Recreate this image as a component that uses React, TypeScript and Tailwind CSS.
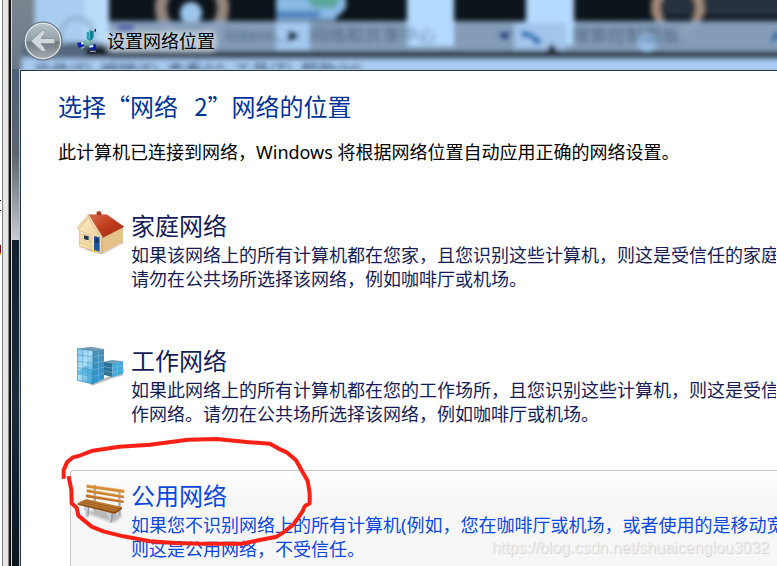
import { ReactNode } from "react";

function GlassBackdrop() {
  return (
    <svg
      className="absolute left-0 top-0"
      width="2000"
      height="72"
      viewBox="12 0 2000 72"
      aria-hidden="true"
    >
      <defs>
        <filter id="soft" x="-20%" y="-20%" width="140%" height="140%">
          <feGaussianBlur stdDeviation="2.8" />
        </filter>
        <linearGradient id="edge" x1="0" y1="0" x2="0" y2="1">
          <stop offset="0" stopColor="#7d858d" />
          <stop offset="0.6" stopColor="#6f7d8b" />
          <stop offset="1" stopColor="#5a6f85" />
        </linearGradient>
      </defs>
      <rect x="0" y="0" width="2012" height="72" fill="#0b131b" />
      <g filter="url(#soft)">
        <rect x="650" y="-10" width="1400" height="26" fill="#25313d" />
        <circle cx="192" cy="8" r="31" fill="none" stroke="#93857d" strokeWidth="12" />
        <circle cx="191" cy="13" r="11" fill="#9dc6ee" />
        <circle cx="678" cy="8" r="22" fill="none" stroke="#a38c7b" strokeWidth="8" />
        <rect x="100" y="21" width="1900" height="30" fill="#8ba5c1" opacity="0.94" />
        <rect x="-10" y="-10" width="46" height="100" fill="url(#edge)" />
        <rect x="35" y="-10" width="74" height="53" fill="#a9cdf0" />
        <rect x="85" y="-10" width="23" height="53" fill="#b9dcfb" />
        <circle cx="77" cy="34" r="16" fill="none" stroke="#8fb0cf" strokeWidth="4" />
        <rect x="22" y="44" width="88" height="13" fill="#53687f" />
        <rect x="86" y="47" width="22" height="9" fill="#10161e" />
        <rect x="106" y="51" width="1900" height="5" fill="#2d3a48" />
        <rect x="22" y="58" width="1990" height="20" fill="#a9cbf1" />
        <rect x="105" y="31" width="112" height="22" rx="8" fill="#e3edf5" opacity="0.4" />
        <path d="M276 -4h70v12l-12 12h-58z" fill="#8abae6" />
        <path d="M303 -6h40l-8 14h-22z" fill="#5da69c" />
        <path d="M276 11h44v7h-44z" fill="#4d80bf" />
        <rect x="276" y="21" width="34" height="29" fill="#a3c8ee" />
        <rect x="407" y="-10" width="47" height="56" fill="#b5daff" />
        <rect x="526" y="-10" width="48" height="55" fill="#b5daff" />
        <rect x="514" y="23" width="52" height="26" fill="#a2c5ea" />
        <circle cx="647" cy="42" r="10" fill="#9cc3ea" />
        <path d="M546 52l6-9 6 9z" fill="#111" />
      </g>
      <g
        filter="url(#soft)"
        fill="#2f455e"
        fontSize="18"
        fontFamily='"Noto Sans CJK SC", sans-serif'
      >
        <g opacity="0.6">
          <text x="225" y="42">Intern...</text>
          <text x="310" y="42">网络和共享中心</text>
          <text x="572" y="42">搜索控制面板</text>
        </g>
        <text x="34" y="78" xmlSpace="preserve">
          文件(F)  编辑(E)  查看(V)  工具(T)  帮助(H)
        </text>
        <path d="M118 25h16v5h-16z" fill="#4655a0" />
        <path d="M289 31l10 5-10 5z" fill="#15202e" />
        <path d="M498 33h13l-6 7z" fill="#1d3578" />
        <path d="M522 31l10 3 10 8-6 2-5-7-9-1z" fill="#205ca4" />
        <path d="M770 42l6-10 4 4z" fill="#22528e" />
      </g>
    </svg>
  );
}

function BackButton() {
  return (
    <button type="button" aria-label="返回" className="size-10 shrink-0">
      <svg viewBox="0 0 40 40" className="size-10">
        <defs>
          <linearGradient id="disc" x1="0" y1="0" x2="0" y2="1">
            <stop offset="0" stopColor="#b7c4cb" />
            <stop offset="0.48" stopColor="#92a0a8" />
            <stop offset="0.54" stopColor="#707b83" />
            <stop offset="1" stopColor="#a6adb1" />
          </linearGradient>
        </defs>
        <circle cx="20" cy="20" r="19" fill="#7c8c99" stroke="#64727e" />
        <circle cx="20" cy="20" r="17.6" fill="url(#disc)" stroke="#e0e6e9" strokeWidth="1.2" />
        <path
          d="M8 20L19 9.500Q22 8.500 22.500 11Q22.500 12 18 17.500H30.500Q32 17.500 32 20T30.500 22.500H18Q22.500 28 22.500 29.500Q22 31.500 19 30.500Z"
          fill="#d2d7d9"
          stroke="#8c979e"
          strokeWidth="1"
        />
      </svg>
    </button>
  );
}

function NetworkIcon() {
  return (
    <svg viewBox="0 0 60 69" className="h-[23px] w-5 shrink-0" aria-hidden="true">
      <path d="M30 34L12 46M34 34L48 46M15 45L44 50" stroke="#4fc06a" strokeWidth="3" />
      <path d="M27 12L38 4L50 7V24L41 36L28 28Z" fill="#188da6" />
      <path d="M27 12L38 4V30L28 28Z" fill="#70d5dc" />
      <path d="M33 9V31M44 7V32" stroke="#075f7c" strokeWidth="3" />
      <path d="M53 0h4v8h-4z" fill="#222" />
      <path d="M0 42L19 39L21 50L5 56Z" fill="#0c20b4" />
      <path d="M12 40L19 39L21 45L13 47Z" fill="#d7eaff" />
      <path d="M36 50L56 45L58 62L42 64Z" fill="#0c20b4" />
      <path d="M36 50L48 47L49 54L38 56Z" fill="#d7eaff" />
      <path d="M13 58l10-4M39 67h17" stroke="#b8c4cb" strokeWidth="3" />
    </svg>
  );
}

function HouseIcon() {
  return (
    <svg viewBox="0 0 144 144" className="size-12" aria-hidden="true">
      <defs>
        <linearGradient id="roof" x1="0" y1="0" x2="1" y2="1">
          <stop offset="0" stopColor="#d9694a" />
          <stop offset="0.5" stopColor="#bf3c1c" />
          <stop offset="1" stopColor="#9c2a12" />
        </linearGradient>
        <linearGradient id="wall" x1="0" y1="0" x2="1" y2="1">
          <stop offset="0" stopColor="#fdebc6" />
          <stop offset="1" stopColor="#ecc98e" />
        </linearGradient>
      </defs>
      <path d="M20 122L76 137L143 101L130 90Z" fill="#000" opacity="0.15" />
      <path d="M75 82L138 50V100L75 133Z" fill="#e6c48b" />
      <path d="M8 55L36 22L75 80V133L8 113Z" fill="url(#wall)" stroke="#b8925c" strokeWidth="1.500" />
      <path
        d="M9 66L75 86M9 77L75 97M9 88L75 109M9 100L75 121M75 93L138 63M75 103L138 73M75 113L138 83M75 123L138 93"
        stroke="#d3b07a"
        strokeWidth="1.200"
      />
      <path d="M59 10L67 8L73 11V27L59 24Z" fill="#8f3218" />
      <path d="M57 9L66 6L75 9L67 13Z" fill="#b94a28" />
      <path d="M35 17H90L141 53L77 86Z" fill="url(#roof)" stroke="#9a3018" />
      <path d="M0 56L35 16L78 86L71 86L35 25L5 60Z" fill="#f4dfb8" stroke="#a97b48" />
      <path d="M18 76L38 80V98L18 94Z" fill="#fff5dc" stroke="#a9824e" />
      <path d="M21 79L35 82V94L21 91Z" fill="#263644" />
      <path d="M47 77L71 83V130L47 125Z" fill="#f4e4c0" />
      <path d="M51 81L68 85V128L51 124Z" fill="#1f559b" />
      <path d="M55 87L64 89V103L55 101Z" fill="#18375f" />
      <path d="M46 122L60 126L56 131L44 127Z" fill="#e9c91f" />
    </svg>
  );
}

function OfficeIcon() {
  return (
    <svg viewBox="0 0 144 144" className="size-12" aria-hidden="true">
      <defs>
        <linearGradient id="front" x1="0" y1="0" x2="1" y2="1">
          <stop offset="0" stopColor="#7cc4ee" />
          <stop offset="0.45" stopColor="#b4e3f9" />
          <stop offset="1" stopColor="#2c9dd7" />
        </linearGradient>
        <linearGradient id="side" x1="0" y1="0" x2="0" y2="1">
          <stop offset="0" stopColor="#4a8db2" />
          <stop offset="1" stopColor="#2a96d2" />
        </linearGradient>
      </defs>
      <path d="M38 120L82 103L143 73L137 94L106 103L47 125Z" fill="#000" opacity="0.25" />
      <path d="M79 53L105 48L138 52L107 62Z" fill="#6d9fb8" />
      <path d="M79 53L106 59V99L79 92Z" fill="#2f7195" />
      <path d="M106 60L138 52V89L106 99Z" fill="#41a8d9" />
      <path d="M106 73L138 63M106 86L138 76M79 67L106 73M79 80L106 86M121 57V94" stroke="#8bc6e0" strokeWidth="1.500" />
      <path d="M1 14L42 8L81 15L48 22Z" fill="#729db4" />
      <path d="M1 14L48 20V120L1 109Z" fill="url(#front)" />
      <path d="M48 20L81 15V105L48 120Z" fill="url(#side)" />
      <path d="M3 82L15 73L26 65L38 76L47 79V94L3 89Z" fill="#319dd1" opacity="0.55" />
      <path
        d="M1 33L48 38M1 52L48 58M1 71L48 78M1 90L48 98M17 16V112M33 18V116"
        stroke="#3f94be"
        strokeWidth="1.500"
      />
      <path d="M48 38L81 33M48 58L81 51M48 78L81 69M48 98L81 87M65 18V112" stroke="#84c4e0" strokeWidth="1.500" />
      <path d="M1 14L48 20V120L1 109Z" fill="none" stroke="#397c9f" strokeWidth="2" />
    </svg>
  );
}

function BenchIcon() {
  return (
    <svg viewBox="0 0 144 144" className="size-12" aria-hidden="true">
      <defs>
        <filter id="ground" x="-20%" y="-50%" width="140%" height="200%">
          <feGaussianBlur stdDeviation="4" />
        </filter>
      </defs>
      <path d="M25 101L60 91L137 107L115 129L85 123Z" fill="#777" opacity="0.5" filter="url(#ground)" />
      <path d="M50 19L57 17V96L50 94ZM124 32L131 30V112L124 110Z" fill="#a4acb4" />
      <path d="M22 78L37 81L34 112L26 115L25 96L20 91Z" fill="#c5ccd4" />
      <path d="M33 82L37 84L35 112L31 113Z" fill="#929ca7" />
      <path d="M90 98L109 97L105 130L96 132L95 114L90 109Z" fill="#c5ccd4" />
      <path d="M103 98L109 97L106 130L102 131Z" fill="#929ca7" />
      <path d="M29 17L142 33V42L29 26Z" fill="#d58b37" />
      <path d="M29 31L141 50V58L29 40Z" fill="#cc812e" />
      <path d="M27 46L140 65V72L27 55Z" fill="#bd7127" />
      <path d="M29 17L142 33M29 31L141 50M27 46L140 65" stroke="#edb665" strokeWidth="2" />
      <path d="M2 72L28 60L135 84L113 103Z" fill="#bd7a31" />
      <path d="M2 72L113 98L135 84V90L114 105L2 77Z" fill="#8d4e18" />
      <path d="M10 69L119 94M19 65L127 89" stroke="#8e531e" strokeWidth="2" />
    </svg>
  );
}

type OptionProps = {
  icon: ReactNode;
  title: string;
  lines: string[];
  active?: boolean;
};

function LocationOption({ icon, title, lines, active }: OptionProps) {
  return (
    <button
      type="button"
      className={
        active
          ? "flex w-full items-start gap-1.5 overflow-hidden whitespace-nowrap rounded-tl border border-r-0 border-[#c6c6c6] bg-linear-to-b from-white to-[#f7f7f7] to-30% px-1.5 py-2 text-left text-[#0b48e0]"
          : "flex w-full items-start gap-1.5 overflow-hidden whitespace-nowrap border border-transparent px-1.5 py-2 text-left text-[#151c55]"
      }
    >
      <span className="size-12 shrink-0">{icon}</span>
      <span className="block">
        <span className="block text-2xl leading-[34px]">{title}</span>
        {lines.map((line) => (
          <span key={line} className="block text-lg leading-6">
            {line}
          </span>
        ))}
      </span>
    </button>
  );
}

const options: OptionProps[] = [
  {
    icon: <HouseIcon />,
    title: "家庭网络",
    lines: [
      "如果该网络上的所有计算机都在您家，且您识别这些计算机，则这是受信任的家庭",
      "请勿在公共场所选择该网络，例如咖啡厅或机场。",
    ],
  },
  {
    icon: <OfficeIcon />,
    title: "工作网络",
    lines: [
      "如果此网络上的所有计算机都在您的工作场所，且您识别这些计算机，则这是受信",
      "作网络。请勿在公共场所选择该网络，例如咖啡厅或机场。",
    ],
  },
  {
    icon: <BenchIcon />,
    title: "公用网络",
    lines: [
      "如果您不识别网络上的所有计算机(例如，您在咖啡厅或机场，或者使用的是移动宽",
      "则这是公用网络，不受信任。",
    ],
    active: true,
  },
];

export default function App() {
  return (
    <div className="relative flex h-screen overflow-hidden bg-white font-['Noto_Sans','Noto_Sans_CJK_SC',sans-serif]">
      {/* window behind */}
      <svg width="2" height="260" className="shrink-0" aria-hidden="true">
        <path d="M0 200h1v1h-1zM0 210h1v1h-1z" fill="#000" />
        <path d="M0 245h1v8h-1z" fill="#7a0b0b" />
        <path d="M0 253h1v2h-1z" fill="#f0a848" />
      </svg>
      <div className="w-1.5 shrink-0 border-l border-[#7b868e] bg-[#e5e5e5]" />
      <div className="w-px shrink-0 bg-[#8b8b8b]" />
      <div className="w-0.5 shrink-0 bg-[#111]" />
      <div className="w-px shrink-0 bg-[#d5d9dc]" />

      <div className="relative flex min-w-0 flex-1 flex-col overflow-hidden bg-[#111c26]">
        <GlassBackdrop />
        <header className="relative flex h-[69px] shrink-0 items-center pl-[11px] pt-3">
          <BackButton />
          <span className="ml-3.5">
            <NetworkIcon />
          </span>
          <h1 className="ml-2.5 text-lg leading-6 text-black [text-shadow:0_0_8px_rgba(255,255,255,0.7)]">
            设置网络位置
          </h1>
        </header>

        <div className="relative flex min-h-0 flex-1">
          <div className="flex w-[7px] shrink-0 flex-col">
            <div className="h-[171px] bg-linear-to-b from-[#4d6074] via-[#5d646c] to-[#c9ccd1]" />
            <div className="flex-1 bg-linear-to-b from-[#15212c] via-[#1d2c3a] to-[#0c161e]" />
          </div>
          <main className="min-w-0 flex-1 border-l border-t border-[#a9c2da]">
            <div className="h-full overflow-hidden border-l border-t border-[#25364b] bg-white pl-[37px] pt-[19px]">
              <h2 className="whitespace-pre font-['Noto_Sans_CJK_SC',sans-serif] text-2xl leading-8 text-[#003399]">
                选择“网络   2”网络的位置
              </h2>
              <p className="mt-3.5 whitespace-nowrap text-lg leading-8 text-black">
                此计算机已连接到网络，Windows 将根据网络位置自动应用正确的网络设置。
              </p>
              <div className="ml-3 mt-8 flex flex-col gap-[35px]">
                {options.map((option) => (
                  <LocationOption key={option.title} {...option} />
                ))}
              </div>
            </div>
          </main>
        </div>
      </div>

      {/* pen mark around the public network */}
      <svg
        className="pointer-events-none absolute left-[50px] top-[430px]"
        width="280"
        height="136"
        viewBox="0 0 840 408"
        fill="none"
        stroke="#ff2015"
        strokeWidth="12"
        strokeLinecap="square"
        strokeLinejoin="round"
        aria-hidden="true"
      >
        <path d="M41 140V120L51 97L69 82L86 78L128 62L208 50L300 44L414 29L500 27L590 36L660 41L684 55L710 67L738 91L753 118L773 153L779 190V220L765 228L757 245L745 263L729 284L705 304L680 320L625 331L575 341L450 341L375 339L300 334L220 319L160 304L125 290L102 271L85 257L80 233L65 220L64 180L57 144" />
      </svg>

      <p className="pointer-events-none absolute bottom-1.5 right-2 font-['Liberation_Sans',sans-serif] text-base leading-6 text-[#f0f0f0] [text-shadow:1px_1px_1px_#cfcfcf]">
        https://blog.csdn.net/shuaicenglou3032
      </p>
    </div>
  );
}
